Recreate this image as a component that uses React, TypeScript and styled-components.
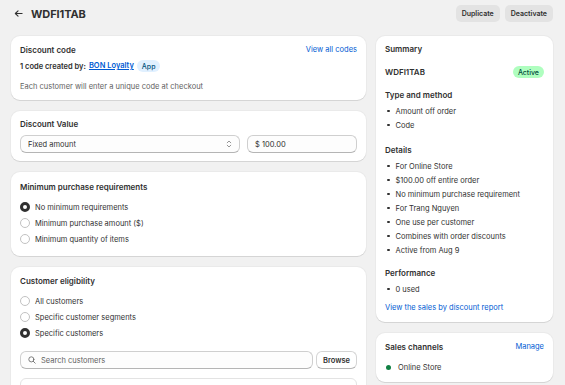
import styled, { createGlobalStyle } from 'styled-components'

const GlobalStyle = createGlobalStyle`
  html, body {
    margin: 0;
    padding: 0;
    background: #f1f1f1;
    font-family: Inter, "Noto Sans", sans-serif;
    color: #303030;
    -webkit-font-smoothing: antialiased;
  }
  * { box-sizing: border-box; }
`

const Page = styled.div`
  width: 565px;
  height: 385px;
  overflow: hidden;
  padding: 5px 12px 0 11px;
`

const Header = styled.header`
  display: flex;
  align-items: center;
  height: 17px;
  margin-bottom: 14px;
`

const BackButton = styled.span`
  display: flex;
  align-items: center;
  width: 9px;
  margin: 0 8px 0 3px;
  color: #303030;
`

const PageTitle = styled.h1`
  margin: 0;
  font-size: 11px;
  font-weight: 700;
  letter-spacing: -0.1px;
  flex: 1;
`

const Actions = styled.div`
  display: flex;
  gap: 5px;
`

const GreyButton = styled.button`
  height: 17px;
  padding: 0 6px;
  border: none;
  border-radius: 5px;
  background: #e3e3e3;
  color: #303030;
  font-family: inherit;
  font-size: 7px;
  font-weight: 600;
`

const Layout = styled.div`
  display: flex;
  align-items: flex-start;
  gap: 10px;
`

const Column = styled.div<{ $width: number }>`
  width: ${({ $width }) => $width}px;
  display: flex;
  flex-direction: column;
  gap: 11px;
  flex-shrink: 0;
`

const Card = styled.section<{ $pad: string }>`
  background: #fff;
  border-radius: 9px;
  padding: ${({ $pad }) => $pad};
  box-shadow: 0 1px 0 rgba(26, 26, 26, 0.1), 0 0 0 1px rgba(26, 26, 26, 0.03);
`

const CardHead = styled.div`
  display: flex;
  align-items: center;
  justify-content: space-between;
  height: 12px;
`

const Heading = styled.h2`
  margin: 0;
  font-size: 8px;
  font-weight: 600;
  line-height: 12px;
`

const Link = styled.a<{ $underline?: boolean }>`
  color: #005bd3;
  font-size: 7.5px;
  line-height: 12px;
  text-decoration: ${({ $underline }) => ($underline ? 'underline' : 'none')};
  cursor: pointer;
`

const CreatedRow = styled.div`
  display: flex;
  align-items: center;
  gap: 3px;
  height: 12px;
  margin-top: 4px;
  font-size: 7.5px;
  font-weight: 600;
`

const Badge = styled.span<{ $tone: 'info' | 'success' }>`
  display: inline-flex;
  align-items: center;
  height: 12px;
  padding: 0 5px;
  border-radius: 6px;
  font-size: 7px;
  font-weight: 500;
  background: ${({ $tone }) => ($tone === 'info' ? '#e0f0ff' : '#affebf')};
  color: ${({ $tone }) => ($tone === 'info' ? '#00527c' : '#014b40')};
`

const Subdued = styled.p`
  margin: 9px 0 0;
  font-size: 7.5px;
  line-height: 12px;
  color: #616161;
`

const FieldRow = styled.div`
  display: flex;
  gap: 7px;
  margin-top: 5px;
`

const Field = styled.div<{ $width?: number }>`
  display: flex;
  align-items: center;
  height: 18px;
  padding: 0 7px;
  border: 1px solid #cfcfcf;
  border-bottom-color: #b5b5b5;
  border-radius: 6px;
  background: #fdfdfd;
  font-size: 7.5px;
  color: #303030;
  gap: 5px;
  flex: ${({ $width }) => ($width ? `0 0 ${$width}px` : '1')};
`

const Grow = styled.span`
  flex: 1;
`

const Placeholder = styled.span`
  flex: 1;
  color: #616161;
`

const RadioList = styled.div`
  display: flex;
  flex-direction: column;
  margin-top: 6px;
`

const RadioRow = styled.label`
  display: flex;
  align-items: center;
  gap: 5px;
  height: 16px;
  font-size: 7.5px;
`

const RadioDot = styled.span<{ $checked?: boolean }>`
  width: 10px;
  height: 10px;
  border-radius: 50%;
  background: #fff;
  border: ${({ $checked }) => ($checked ? '3px solid #303030' : '1px solid #c2c2c2')};
`

const SearchRow = styled.div`
  display: flex;
  gap: 3px;
  margin-top: 10px;
`

const WhiteButton = styled.button`
  height: 18px;
  padding: 0 6px;
  border: 1px solid #d4d4d4;
  border-bottom-color: #b5b5b5;
  border-radius: 6px;
  background: #fff;
  font-family: inherit;
  font-size: 7.5px;
  font-weight: 600;
  color: #303030;
`

const ListBox = styled.div`
  height: 30px;
  margin-top: 9px;
  border: 1px solid #e3e3e3;
  border-radius: 6px;
`

const SummaryCode = styled.div`
  display: flex;
  align-items: center;
  justify-content: space-between;
  height: 12px;
  margin-top: 11px;
  font-size: 8px;
  font-weight: 600;
`

const Section = styled.div<{ $gap: number }>`
  margin-top: ${({ $gap }) => $gap}px;
`

const Bullets = styled.ul`
  list-style: none;
  margin: 3px 0 0;
  padding: 0;
`

const Bullet = styled.li`
  display: flex;
  align-items: center;
  height: 14px;
  padding-left: 2px;
  gap: 6px;
  font-size: 7.5px;

  &::before {
    content: '';
    width: 2.5px;
    height: 2.5px;
    border-radius: 50%;
    background: #303030;
  }
`

const ReportLink = styled.div`
  margin-top: 6px;
  height: 12px;
  display: flex;
  align-items: center;
`

const Channel = styled.div`
  display: flex;
  align-items: center;
  gap: 7px;
  height: 12px;
  margin-top: 8px;
  padding-left: 1px;
  font-size: 7.5px;

  &::before {
    content: '';
    width: 5px;
    height: 5px;
    border-radius: 50%;
    background: #108043;
  }
`

const details = [
  'For Online Store',
  '$100.00 off entire order',
  'No minimum purchase requirement',
  'For Trang Nguyen',
  'One use per customer',
  'Combines with order discounts',
  'Active from Aug 9',
]

export default function App() {
  return (
    <Page>
      <GlobalStyle />
      <Header>
        <BackButton>
          <svg width="9" height="9" viewBox="0 0 10 10" fill="none" stroke="currentColor" strokeWidth="1.2" strokeLinecap="round" strokeLinejoin="round">
            <path d="M9 5H1.5M4.5 2L1.5 5l3 3" />
          </svg>
        </BackButton>
        <PageTitle>WDFI1TAB</PageTitle>
        <Actions>
          <GreyButton>Duplicate</GreyButton>
          <GreyButton>Deactivate</GreyButton>
        </Actions>
      </Header>

      <Layout>
        <Column $width={355}>
          <Card $pad="8px 9px 7px">
            <CardHead>
              <Heading>Discount code</Heading>
              <Link>View all codes</Link>
            </CardHead>
            <CreatedRow>
              1 code created by: <Link $underline>BON Loyalty</Link>
              <Badge $tone="info">App</Badge>
            </CreatedRow>
            <Subdued>Each customer will enter a unique code at checkout</Subdued>
          </Card>

          <Card $pad="7px 9px 8px">
            <Heading>Discount Value</Heading>
            <FieldRow>
              <Field>
                <Grow>Fixed amount</Grow>
                <svg width="6" height="8" viewBox="0 0 6 8" fill="none" stroke="#8a8a8a" strokeWidth="0.9" strokeLinecap="round" strokeLinejoin="round">
                  <path d="M1.2 2.8L3 1l1.8 1.8M1.2 5.2L3 7l1.8-1.8" />
                </svg>
              </Field>
              <Field $width={110}>$ 100.00</Field>
            </FieldRow>
          </Card>

          <Card $pad="9px 9px 9px">
            <Heading>Minimum purchase requirements</Heading>
            <RadioList>
              <RadioRow><RadioDot $checked />No minimum requirements</RadioRow>
              <RadioRow><RadioDot />Minimum purchase amount ($)</RadioRow>
              <RadioRow><RadioDot />Minimum quantity of items</RadioRow>
            </RadioList>
          </Card>

          <Card $pad="8px 9px 9px">
            <Heading>Customer eligibility</Heading>
            <RadioList>
              <RadioRow><RadioDot />All customers</RadioRow>
              <RadioRow><RadioDot />Specific customer segments</RadioRow>
              <RadioRow><RadioDot $checked />Specific customers</RadioRow>
            </RadioList>
            <SearchRow>
              <Field>
                <svg width="8" height="8" viewBox="0 0 10 10" fill="none" stroke="#616161" strokeWidth="1" strokeLinecap="round">
                  <circle cx="4.2" cy="4.2" r="3.2" />
                  <path d="M6.6 6.6L9 9" />
                </svg>
                <Placeholder>Search customers</Placeholder>
              </Field>
              <WhiteButton>Browse</WhiteButton>
            </SearchRow>
            <ListBox />
          </Card>
        </Column>

        <Column $width={177}>
          <Card $pad="7px 9px 8px">
            <Heading>Summary</Heading>
            <SummaryCode>
              WDFI1TAB
              <Badge $tone="success">Active</Badge>
            </SummaryCode>
            <Section $gap={11}>
              <Heading>Type and method</Heading>
              <Bullets>
                <Bullet>Amount off order</Bullet>
                <Bullet>Code</Bullet>
              </Bullets>
            </Section>
            <Section $gap={12}>
              <Heading>Details</Heading>
              <Bullets>
                {details.map((d) => (
                  <Bullet key={d}>{d}</Bullet>
                ))}
              </Bullets>
            </Section>
            <Section $gap={10}>
              <Heading>Performance</Heading>
              <Bullets>
                <Bullet>0 used</Bullet>
              </Bullets>
            </Section>
            <ReportLink>
              <Link>View the sales by discount report</Link>
            </ReportLink>
          </Card>

          <Card $pad="8px 9px 9px">
            <CardHead>
              <Heading>Sales channels</Heading>
              <Link>Manage</Link>
            </CardHead>
            <Channel>Online Store</Channel>
          </Card>
        </Column>
      </Layout>
    </Page>
  )
}
